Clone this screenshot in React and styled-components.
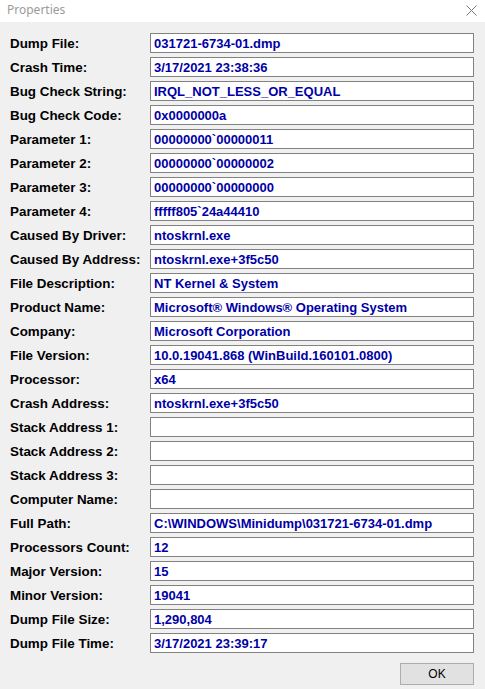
import React from 'react'
import styled, { createGlobalStyle } from 'styled-components'

const GlobalStyle = createGlobalStyle`
  html, body {
    margin: 0;
    padding: 0;
    background: #f0f0f0;
  }
  body {
    font-family: "Liberation Sans", Arial, sans-serif;
  }
`

const Window = styled.div`
  width: 485px;
  height: 689px;
  display: flex;
  flex-direction: column;
  background: #f0f0f0;
  overflow: hidden;
`

const TitleBar = styled.div`
  height: 22px;
  flex-shrink: 0;
  box-sizing: border-box;
  background: #fff;
  display: flex;
  align-items: flex-start;
  justify-content: space-between;
  padding: 2px 8px 0 7px;
  .title{
    font-family: "Noto Sans", "Open Sans", sans-serif;
    font-size: 12px;
    line-height: 15px;
    color: #9a9a9a;
  }
  svg{
    margin-top: 3px;
  }
`

const Form = styled.div`
  flex-shrink: 0;
  display: flex;
  flex-direction: column;
  gap: 4px;
  padding: 11px 11px 0 10px;
`

const Row = styled.div`
  height: 20px;
  display: flex;
  align-items: center;
`

const Label = styled.div`
  width: 140px;
  font-size: 13.4px;
  font-weight: bold;
  color: #000;
  white-space: nowrap;
`

const Field = styled.div`
  flex: 1;
  height: 20px;
  box-sizing: border-box;
  border: 1px solid #828282;
  background: #fff;
  padding: 0 0 0 3px;
  display: flex;
  align-items: center;
  font-size: 13px;
  font-weight: bold;
  color: #0000a8;
  white-space: nowrap;
  overflow: hidden;
`

const Footer = styled.div`
  flex-shrink: 0;
  display: flex;
  justify-content: flex-end;
  padding: 10px 11px 0 0;
`

const Button = styled.button`
  width: 74px;
  height: 22px;
  box-sizing: border-box;
  background: #e1e1e1;
  border: 1px solid #adadad;
  font-family: "Liberation Sans", Arial, sans-serif;
  font-size: 12px;
  color: #000;
  padding: 0;
`

const rows = [
  ['Dump File:', '031721-6734-01.dmp'],
  ['Crash Time:', '3/17/2021 23:38:36'],
  ['Bug Check String:', 'IRQL_NOT_LESS_OR_EQUAL'],
  ['Bug Check Code:', '0x0000000a'],
  ['Parameter 1:', '00000000`00000011'],
  ['Parameter 2:', '00000000`00000002'],
  ['Parameter 3:', '00000000`00000000'],
  ['Parameter 4:', 'fffff805`24a44410'],
  ['Caused By Driver:', 'ntoskrnl.exe'],
  ['Caused By Address:', 'ntoskrnl.exe+3f5c50'],
  ['File Description:', 'NT Kernel & System'],
  ['Product Name:', 'Microsoft® Windows® Operating System'],
  ['Company:', 'Microsoft Corporation'],
  ['File Version:', '10.0.19041.868 (WinBuild.160101.0800)'],
  ['Processor:', 'x64'],
  ['Crash Address:', 'ntoskrnl.exe+3f5c50'],
  ['Stack Address 1:', ''],
  ['Stack Address 2:', ''],
  ['Stack Address 3:', ''],
  ['Computer Name:', ''],
  ['Full Path:', 'C:\\WINDOWS\\Minidump\\031721-6734-01.dmp'],
  ['Processors Count:', '12'],
  ['Major Version:', '15'],
  ['Minor Version:', '19041'],
  ['Dump File Size:', '1,290,804'],
  ['Dump File Time:', '3/17/2021 23:39:17'],
]

const App = () => (
  <Window>
    <GlobalStyle />
    <TitleBar>
      <span className="title">Properties</span>
      <svg width="11" height="11" viewBox="0 0 11 11">
        <path d="M0.5 0.5L10.5 10.5M10.5 0.5L0.5 10.5" stroke="#777" strokeWidth="1" fill="none" />
      </svg>
    </TitleBar>
    <Form>
      {rows.map(([name, value]) => (
        <Row key={name}>
          <Label>{name}</Label>
          <Field>{value}</Field>
        </Row>
      ))}
    </Form>
    <Footer>
      <Button>OK</Button>
    </Footer>
  </Window>
)

export default App
